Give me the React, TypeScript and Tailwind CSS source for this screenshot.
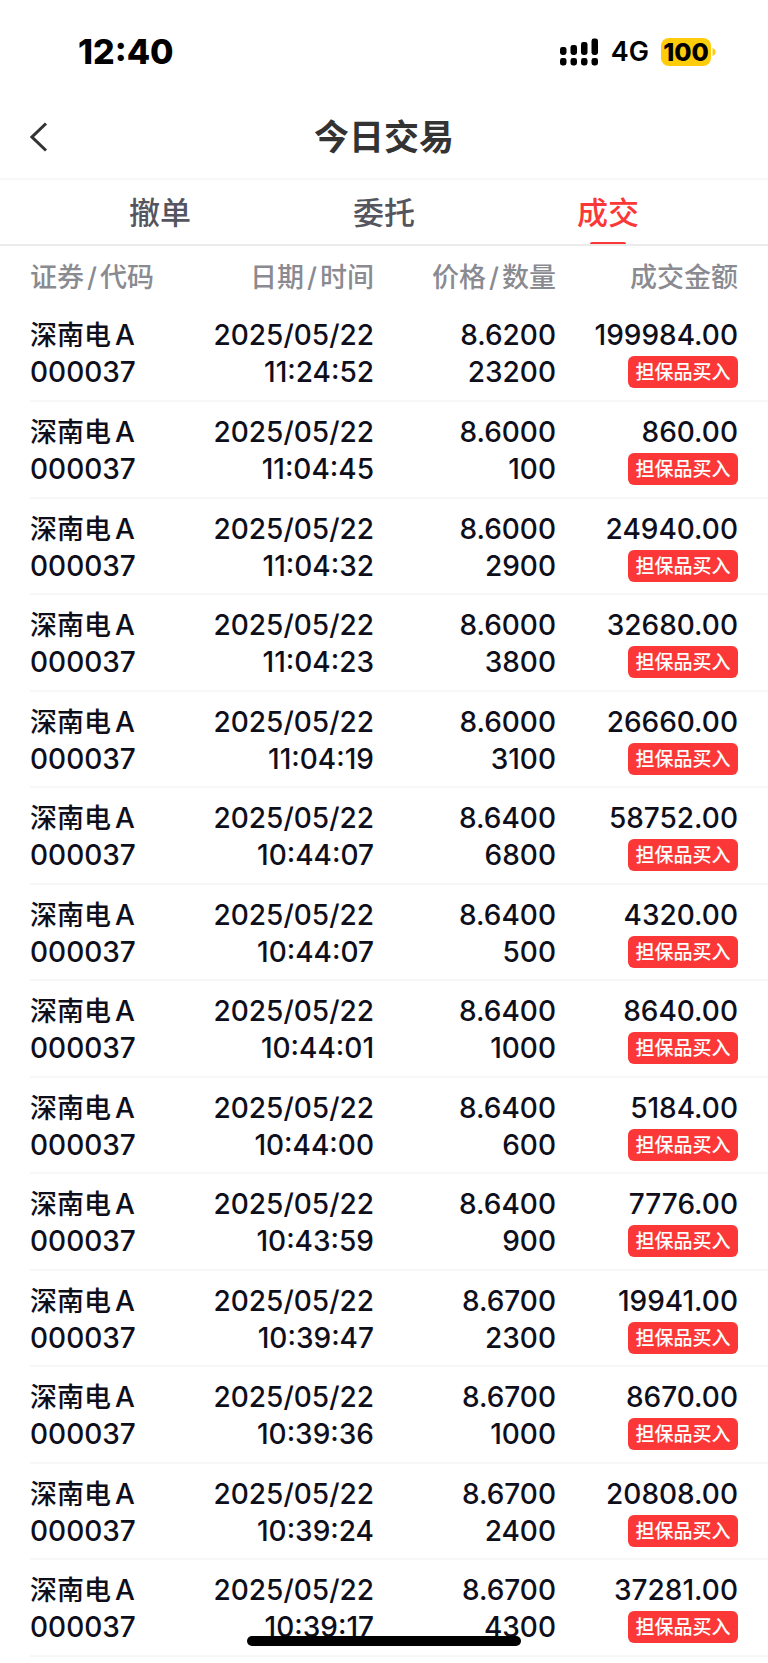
import { useState } from 'react';
import clsx from 'clsx';

type Trade = {
  time: string;
  price: string;
  quantity: string;
  amount: string;
};

const TABS = ['撤单', '委托', '成交'];

const TRADES: Trade[] = [
  { time: '11:24:52', price: '8.6200', quantity: '23200', amount: '199984.00' },
  { time: '11:04:45', price: '8.6000', quantity: '100', amount: '860.00' },
  { time: '11:04:32', price: '8.6000', quantity: '2900', amount: '24940.00' },
  { time: '11:04:23', price: '8.6000', quantity: '3800', amount: '32680.00' },
  { time: '11:04:19', price: '8.6000', quantity: '3100', amount: '26660.00' },
  { time: '10:44:07', price: '8.6400', quantity: '6800', amount: '58752.00' },
  { time: '10:44:07', price: '8.6400', quantity: '500', amount: '4320.00' },
  { time: '10:44:01', price: '8.6400', quantity: '1000', amount: '8640.00' },
  { time: '10:44:00', price: '8.6400', quantity: '600', amount: '5184.00' },
  { time: '10:43:59', price: '8.6400', quantity: '900', amount: '7776.00' },
  { time: '10:39:47', price: '8.6700', quantity: '2300', amount: '19941.00' },
  { time: '10:39:36', price: '8.6700', quantity: '1000', amount: '8670.00' },
  { time: '10:39:24', price: '8.6700', quantity: '2400', amount: '20808.00' },
  { time: '10:39:17', price: '8.6700', quantity: '4300', amount: '37281.00' },
];

/** Dual-SIM signal: bars for the first line, dots for the second */
function SignalIcon() {
  return (
    <svg width="39" height="28" viewBox="0 0 39 28" aria-hidden="true">
      <rect x="0" y="9" width="6.5" height="8" rx="2.4" />
      <rect x="10.5" y="7" width="6.5" height="10" rx="2.4" />
      <rect x="21" y="4" width="6.5" height="13" rx="2.4" />
      <rect x="31.5" y="0.5" width="6.5" height="16.5" rx="2.4" />
      <rect x="0" y="20" width="6.5" height="7.5" rx="2.4" />
      <rect x="10.5" y="20" width="6.5" height="7.5" rx="2.4" />
      <rect x="21" y="20" width="6.5" height="7.5" rx="2.4" />
      <rect x="31.5" y="20" width="6.5" height="7.5" rx="2.4" />
    </svg>
  );
}

function StatusBar() {
  return (
    <div className="flex h-[103px] items-center justify-between pl-[78px] pr-[52px] text-black">
      <span className="text-[34px] font-extrabold leading-10">12:40</span>
      <div className="flex items-center">
        <SignalIcon />
        <span className="ml-3 text-[27px] font-semibold leading-8">4G</span>
        <span className="ml-3 flex h-7 w-[50px] items-center justify-center rounded-lg bg-[#ffcc0a] text-[25px] font-extrabold leading-7">
          100
        </span>
        <svg className="ml-px" width="4" height="8" viewBox="0 0 4 8" aria-hidden="true">
          <path d="M0.5 0C2.6 0.8 3.6 2.2 3.6 4S2.6 7.2 0.5 8z" fill="#ffcc0a" />
        </svg>
      </div>
    </div>
  );
}

function NavBar() {
  return (
    <header className="grid h-[77px] grid-cols-[1fr_auto_1fr] items-center border-b-2 border-[#f8f8f8] pb-2 text-[#333]">
      <button type="button" aria-label="返回" className="flex h-full w-20 items-center pl-[30px]">
        <svg width="18" height="30" viewBox="0 0 18 30" fill="none" aria-hidden="true">
          <path d="M16 1.5L2 15L16 28.5" stroke="#333" strokeWidth="3" />
        </svg>
      </button>
      <h1 className="text-[35px] font-bold leading-10">今日交易</h1>
    </header>
  );
}

/** Column title for two stacked fields, e.g. 日期/时间 */
function PairTitle({ top, bottom }: { top: string; bottom: string }) {
  return (
    <>
      {top}
      <span className="mx-[3px]">/</span>
      {bottom}
    </>
  );
}

function TradeRow({ trade }: { trade: Trade }) {
  return (
    <tr className="h-24 border-b-2 border-[#f7f7f8] align-top even:h-[97px]">
      <td className="pt-3">
        <div className="flex h-[37px] items-center gap-1">
          <span className="text-[27px]">深南电</span>
          <span>A</span>
        </div>
        <div>000037</div>
      </td>
      <td className="pt-3 text-right">
        <div>2025/05/22</div>
        <div>{trade.time}</div>
      </td>
      <td className="pt-3 text-right">
        <div>{trade.price}</div>
        <div>{trade.quantity}</div>
      </td>
      <td className="pt-3 pr-[30px]">
        <div className="text-right">{trade.amount}</div>
        <div className="flex h-[35px] items-center justify-end">
          <span className="flex h-8 w-[110px] items-center justify-center rounded-md bg-[#fc3737] pt-px text-[19px] text-white">
            担保品买入
          </span>
        </div>
      </td>
    </tr>
  );
}

export default function App() {
  const [active, setActive] = useState('成交');

  return (
    <div
      lang="zh-CN"
      className="relative min-h-screen overflow-hidden bg-white font-['Inter','Noto_Sans_CJK_SC',sans-serif]"
    >
      <StatusBar />
      <NavBar />

      <nav className="flex h-[66px] border-b-2 border-[#ebebec] px-12">
        {TABS.map((tab) => (
          <button
            key={tab}
            type="button"
            onClick={() => setActive(tab)}
            className={clsx(
              'relative flex-1 pt-0.5 text-[31px] font-medium leading-10',
              tab === active ? 'text-[#fc3737]' : 'text-[#55555f]',
            )}
          >
            {tab}
            {tab === active && (
              <span className="absolute bottom-0 left-1/2 h-[2px] w-9 -translate-x-1/2 rounded-t-full bg-[#fc3737]" />
            )}
          </button>
        ))}
      </nav>

      <main className="pl-[30px]">
        <table className="w-full table-fixed border-collapse text-[28px] font-medium leading-[37px] text-[#0f0f1c]">
          <colgroup>
            <col className="w-[148px]" />
            <col className="w-[196px]" />
            <col className="w-[182px]" />
            <col className="w-[212px]" />
          </colgroup>
          <thead>
            <tr className="h-[59px] text-[27px] text-[#8a8a91]">
              <th className="pt-[3px] text-left font-medium">
                <PairTitle top="证券" bottom="代码" />
              </th>
              <th className="pt-[3px] text-right font-medium">
                <PairTitle top="日期" bottom="时间" />
              </th>
              <th className="pt-[3px] text-right font-medium">
                <PairTitle top="价格" bottom="数量" />
              </th>
              <th className="pt-[3px] pr-[30px] text-right font-medium">成交金额</th>
            </tr>
          </thead>
          <tbody>
            {TRADES.map((trade, i) => (
              <TradeRow key={i} trade={trade} />
            ))}
          </tbody>
        </table>
      </main>

      {/* home indicator */}
      <div className="fixed bottom-[17px] left-1/2 h-[10px] w-[274px] -translate-x-1/2 rounded-full bg-black" />
    </div>
  );
}
